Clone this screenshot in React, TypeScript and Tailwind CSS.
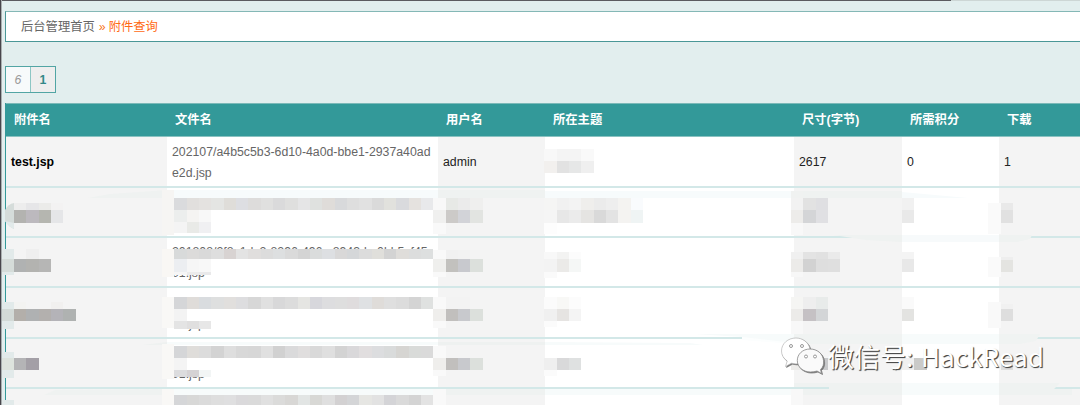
import React from "react";

type Strip = { k: number; y: number; h: number; c: string[] };

const COL = 37 / 3;
const cellX = (k: number) => Math.round(1.5 + COL * k);

const names = (y: number, h: number, c: string): Strip => ({ k: 14, y, h, c: c.split(" ").map((s) => "#" + s) });

const s = (k: number, y: number, h: number, c: string): Strip => ({
  k,
  y,
  h,
  c: c.split(" ").map((v) => (v === "-" ? "transparent" : "#" + v)),
});

const strips: Strip[] = [
  // first row, subject column
  s(44, 149, 12, "f8f8f8 f4f4f4 f4f4f4 f9f9f9"),
  s(44, 161, 12, "f2f0ee e2e2e2 e6e7e7 efefef"),
  // second row
  s(1, 203, 7, "ededed e6e6e8 ebebe9 f3f2f2"),
  s(1, 210, 13, "b3b3b0 bcb9be b5b6b0 e5e6e8"),
  s(13, 190, 45, "f6f5f3"),
  names(198, 12, "dadbdd e1dfdd e4e2e0 e4e5e3 dfddd9 dddee2 dddcdb e0e0df dadadb dfdfde e5e5e6 dfe1df dfdcd9 d8d9db dedede e1e1e1 dadada e1e1dd d9dadd e5e2df e8e9eb"),
  s(14, 210, 12, "eceeed f5f4f2 f8f8f8"),
  s(14, 222, 11, "f4f4f4 e9eae7 f0f0f2"),
  s(35, 198, 12, "f8f8f8 e7e9e6 ebebeb efefee"),
  s(35, 210, 13, "f0f0ef cccac8 d2d3d8 e2e4e1"),
  s(35, 223, 11, "f9f9f9"),
  s(44, 198, 12, "f5f5f4 f1f1f1 f3f3f3 efeeec ebebeb eeeeee f4f3f1 f9fbfd"),
  s(44, 210, 13, "f5f5f5 e7e7e7 ebebeb e5e4e2 d9d9d9 e3e3e3 f4f3f1 eff4f4"),
  s(44, 223, 11, "fdfdfd"),
  s(64, 191, 7, "f0f2f1"),
  s(64, 198, 12, "f2f2f2 e2e2e2 dfdfe2"),
  s(64, 210, 13, "edecea d4d5d7 e0e0e3"),
  s(64, 223, 12, "f8f8f8"),
  s(73, 198, 12, "f1f1f1"),
  s(73, 210, 13, "e9e9e9"),
  s(80, 203, 31, "fafafa"),
  s(81, 203, 7, "e9e9e9"),
  s(81, 210, 13, "e1e1e1"),
  // third row
  s(0, 249, 10, "e2eaea - efefef"),
  s(0, 259, 13, "d5dcd9 b0b2b2 b3b3b0 b6b6b5"),
  s(0, 272, 3, "e2eaea"),
  s(13, 249, 28, "f9f7f4"),
  names(249, 10, "d8dada dcdbda d9d9d9 dedede d8d3d2 e3e3e3 e0dedd dcdcdc dddfe0 dadada d4d4d4 dadcdc dddfe2 d9d8d8 d5d7d9 dcdcdc e0dfdb d3d3d3 dfddda dcdddd dddfdf"),
  s(14, 259, 13, "eceef1 f6f6f6 f8f8f8"),
  s(14, 272, 3, "f6f6f6 ebebeb e9e9ea"),
  s(35, 250, 9, "f9f9f9 f1f1f1 f2f2f2"),
  s(35, 259, 13, "efefed c2c1be c8c9ce dce0dc"),
  s(35, 272, 5, "f9f9f9"),
  s(44, 252, 7, "f8f8f8 f3f3f2 fcfcfc"),
  s(44, 259, 13, "f3f3f3 ebeae8 f5f7f6"),
  s(44, 272, 6, "fafafa"),
  s(64, 252, 7, "f0f0f0 e3e3e3 e1e1e1 eaeaea"),
  s(64, 259, 13, "ecebe9 d2d2d2 dedede dfdfdf"),
  s(64, 272, 5, "f7f7f7"),
  s(73, 252, 7, "f4f4f4"),
  s(73, 259, 13, "e8e8e8"),
  s(80, 257, 20, "fafafa"),
  s(81, 257, 3, "eeeeee"),
  s(81, 260, 12, "e4e4e1"),
  // fourth row
  s(0, 302, 7, "e2eaea f3f3f1 - - f1f0ef"),
  s(0, 309, 12, "d3dad7 b3afaa afb1b2 b3b0ae b4b3b8 afb2b1"),
  s(0, 321, 8, "e2eaea"),
  s(13, 297, 31, "f9f8f6"),
  names(297, 12, "d5d6d8 dfdcd9 d9dcdf dedfdf e1dfdd dddddf d7d7d7 e0e0e0 d8d8d9 dcdcdc e5e5e2 d7d7dc dddddf dedede dfdcdd dfe1e3 dfdcd9 dfdfdf dcdcdc d4d4d4 dfe1e0"),
  s(14, 309, 12, "f3f3f3 ffffff ffffff"),
  s(14, 321, 8, "e4e4e4 e0dfdf e7e7e7"),
  s(35, 297, 12, "f9f9f9 f3f3f3 f3f3f3"),
  s(35, 309, 12, "efeeec c1bfbd c8c9cd dce0dc"),
  s(35, 321, 7, "f9f9f9"),
  s(44, 297, 12, "fbfbfb f8f8f6 fcfcfc"),
  s(44, 309, 12, "f0f0f0 e6e4e2 f4f4f4"),
  s(44, 321, 6, "fbfbfb"),
  s(64, 297, 12, "f5f5f3 eeeeee e8ebea"),
  s(64, 309, 12, "ecebe9 c5c1c4 d3d5d7"),
  s(64, 321, 13, "f8f8f8"),
  s(73, 297, 12, "fafafa"),
  s(73, 309, 12, "e3e3e1"),
  s(80, 302, 26, "f9f9f9"),
  s(81, 304, 5, "f1f1f1"),
  s(81, 309, 12, "dedede"),
  // fifth row
  s(0, 352, 6, "e2eaea"),
  s(0, 358, 12, "dde3dd b4b4b6 a39fa6"),
  s(0, 370, 8, "e2eaea"),
  s(13, 344, 35, "f9f8f6"),
  names(346, 12, "d5d6d8 dfddda dcdcdc d3d3d3 dedede d8d8d8 d7d7d7 e0e0e0 d1d1d1 dadadb e0dede d9d9d9 dfdfdf d3d3d3 d9d8da e1dedf dcdddf d9dbdb d6d5d2 d9dbd9 dadada"),
  s(14, 358, 12, "f4f4f4 ffffff ffffff"),
  s(14, 370, 7, "dcdcde d5d2d4 f2f5f5"),
  s(35, 346, 12, "f9f9f9"),
  s(35, 358, 12, "efeeec c1bfbd c8c9cd dce0dc"),
  s(35, 370, 6, "f9f9f9"),
  s(44, 358, 12, "efefef d9d9da dfe1e1"),
  s(44, 370, 6, "fbfbfb"),
  s(64, 358, 12, "edecea dfdfdf c8c9cb"),
  s(73, 358, 12, "f0f0f0 cacac8"),
  s(81, 358, 12, "dddddd"),
  // sixth row
  s(0, 400, 5, "e2eaea"),
  s(13, 389, 16, "f9f8f6"),
  names(395, 10, "d5d6d8 d8d8d7 dbdbdb dedede dfdfe0 dad9db dadada e0e0e0 dbdbda d8d7d5 e2e5e4 d8d8d5 dfdfdf d3d1d2 d4d5d7 e6e6e3 e2e2e2 d4d4d7 dadada d4d4d4 e3e3e3"),
  s(35, 389, 16, "f9f9f9"),
  s(64, 389, 16, "f8f8f8"),
];

const grid = "grid grid-cols-[161px_271px_107px_249px_108px_97px_1fr]";

function Mosaic() {
  return (
    <>
      {strips.map((strip, i) => (
        <div
          key={i}
          className="absolute flex"
          style={{ left: strip.k === 0 ? 2 : cellX(strip.k), top: strip.y, height: strip.h }}
        >
          {strip.c.map((color, j) => {
            const k = strip.k + j;
            const left = k === 0 ? 2 : cellX(k);
            return <span key={j} style={{ width: cellX(k + 1) - left, background: color }} />;
          })}
        </div>
      ))}
    </>
  );
}

function Smudges() {
  return (
    <svg className="absolute inset-0" width="1080" height="405">
      <path d="M167 190H438V198H167ZM545 191H794V198H545ZM902 192L968 198H902Z" fill="#f7fbfc" />
      <path d="M88 198L110 194L167 190V198ZM438 190H545V198H438ZM794 191H902V198H794Z" fill="#eff2f1" />
      <path d="M834 235H1032L1030 239L1017 242H900L865 240Z" fill="#eff2f1" />
      <path d="M902 235H999V242H902Z" fill="#f7fafb" />
      <path d="M742 336H794V344L742 340Z" fill="#fcfefe" />
      <path d="M794 334H1040L1036 341L1020 344H794Z" fill="#f0f3f2" />
      <path d="M695 334H794V343L742 337ZM902 334H999V344H902Z" fill="#f7fbfb" />
      <path d="M142 345L167 342V345ZM438 342H545V345H438Z" fill="#eef1f0" />
      <path d="M167 342H438V345H167ZM545 342L690 343L703 345H545Z" fill="#f7fbfb" />
      <path d="M829 386H1054V390H829Z" fill="#f3f4f4" />
      <path d="M44 395L55 390L167 389V395ZM438 389H545V395H438ZM794 383H902V395H794ZM999 383H1060L1054 389H1072V395H999Z" fill="#eff2f1" />
      <path d="M794 387H829V389H794Z" fill="#d3e8e8" />
      <path d="M167 389H438V395H167ZM545 389H794V395H545ZM902 383H999V395H902Z" fill="#f7fbfb" />
      <path d="M5 210Q8 204 14 203V229Q8 226 5 221Z" fill="#d5dcda" />
      <path d="M5 221L14 223V229Q8 226 5 221Z" fill="#e2eaea" />
    </svg>
  );
}

function Watermark() {
  return (
    <div className="absolute left-[780px] top-[336px] flex items-center">
      <svg width="46" height="40" viewBox="0 0 46 40" className="drop-shadow-[1px_1px_0.5px_#777]">
        <path
          d="M16 2C8 2 1.500 7.500 1.500 15C1.500 19 3.500 22.500 7.200 25L5.500 30.500L11.500 27.200Q16 28.500 20 27.500C29 27 31 20 30 13C28.500 6 22.500 2 16 2Z"
          fill="#fff" stroke="#aaa" strokeWidth="0.6"
        />
        <path
          d="M30 13C22.500 13 17.300 18.300 17.300 24.500C17.300 31 23 36 30.500 36Q34 36 37 35L41.500 37.500L40.500 33.500C43 31.500 44 28 43.500 24.500C43 18 37.500 13 30 13Z"
          fill="#fafafa" stroke="#888" strokeWidth="0.8"
        />
        <g fill="#fff" stroke="#999" strokeWidth="1">
          <circle cx="11" cy="10" r="1.500" />
          <circle cx="22" cy="10" r="1.500" />
          <circle cx="26" cy="20.500" r="1.500" />
          <circle cx="35" cy="20.500" r="1.500" />
        </g>
      </svg>
      <div className="ml-[2px] flex font-['Noto_Sans_CJK_SC','Noto_Sans',sans-serif] text-[26px] leading-[40px] font-normal text-white [text-shadow:1px_1px_1px_#444,1px_1px_0_#888]">
        <span className="w-[93px]">微信号:</span>
        <span className="tracking-[0.1px] whitespace-nowrap">HackRead</span>
      </div>
    </div>
  );
}

type RowProps = { height: string; cells: React.ReactNode[] };

function Row({ height, cells }: RowProps) {
  return (
    <div className={`${grid} ${height} border-b-2 border-[#d3e8e8]`}>
      {Array.from({ length: 7 }, (_, i) => (
        <div key={i} className={`flex items-center pt-[2px] pl-[5px] ${i % 2 === 0 ? "bg-[#f4f4f4]" : "bg-white"}`}>
          {cells[i]}
        </div>
      ))}
    </div>
  );
}

function FileName({ a, b }: { a: string; b: string }) {
  return (
    <div className="leading-[20.6px] whitespace-nowrap text-[#666]">
      {a || "\u00a0"}
      <br />
      {b}
    </div>
  );
}

const headers = ["附件名", "文件名", "用户名", "所在主题", "尺寸(字节)", "所需积分", "下载"];

export default function App() {
  return (
    <div className="relative h-[405px] w-[1080px] overflow-hidden bg-[#e2eeee] font-['Liberation_Sans','Noto_Sans_CJK_SC',sans-serif] text-[12.3px] text-[#222]">
      <div className="flex h-[11px] items-start">
        <div className="h-px w-[951px] bg-[#5c5b60]" />
        <div className="h-px flex-1 bg-[#cdd6d5]" />
      </div>
      <div className="ml-[5px] flex h-[31px] items-center border border-r-0 border-[#4a9797] border-t-[#84b8b6] bg-white pt-[2px] pl-[15px] text-[#666]">
        <span>后台管理首页</span>
        <span className="ml-[4px] text-[#f97316]">»</span>
        <span className="ml-[3px] text-[#ff6a13]">附件查询</span>
      </div>
      <div className="mt-[24px] ml-[5px] flex h-[27px] w-[51px] border border-[#52a5a4] leading-[26px]">
        <div className="w-[25px] border-r border-[#8dc6c4] bg-[#f7fafb] text-center text-[#999] italic">6</div>
        <div className="flex-1 bg-[#eee] text-center font-bold text-[#338888]">1</div>
      </div>
      <div className="mt-[10px] ml-[5px] border-l border-[#399]">
        <div className={`${grid} h-[34px] border-t border-b border-t-[#7bb9b8] border-b-[#8ac2c1] bg-[#339999] font-bold text-white`}>
          {headers.map((h) => (
            <div key={h} className="flex items-center pl-[8px] whitespace-nowrap">
              {h}
            </div>
          ))}
        </div>
        <Row
          height="h-[51px]"
          cells={[
            <b className="text-black">test.jsp</b>,
            <FileName a="202107/a4b5c5b3-6d10-4a0d-bbe1-2937a40ad" b="e2d.jsp" />,
            "admin",
            "",
            "2617",
            "0",
            "1",
          ]}
        />
        <Row height="h-[50px]" cells={[]} />
        <Row
          height="h-[50px]"
          cells={["", <FileName a="201808/2f8c1dc2-8296-496c-8943-bc0bb5cf45" b="01.jsp" />]}
        />
        <Row height="h-[51px]" cells={["", <FileName a="" b="01.jsp" />]} />
        <Row height="h-[50px]" cells={["", <FileName a="" b="01.jsp" />]} />
        <Row height="h-[50px]" cells={[]} />
      </div>
      <div className="absolute top-0 left-0 h-full w-[2px] border-r border-[#a9afb0] bg-[#48464c]" />
      <Smudges />
      <Mosaic />
      <Watermark />
    </div>
  );
}
